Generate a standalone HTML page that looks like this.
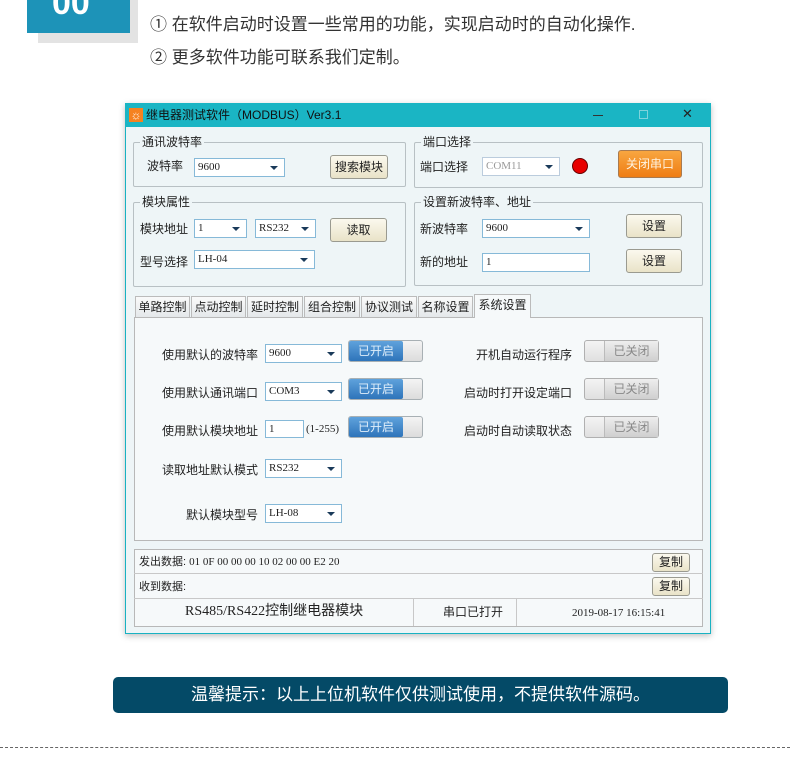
<!DOCTYPE html>
<html><head><meta charset="utf-8"><style>
*{margin:0;padding:0;box-sizing:border-box}
body{width:790px;height:760px;background:#fff;position:relative;overflow:hidden;font-family:"Liberation Sans","Noto Sans CJK SC",sans-serif;color:#222}
.a{position:absolute}
.t{position:absolute;font-size:12px;white-space:nowrap;line-height:14px}
.grp{position:absolute;border:1px solid #b8c0c4;border-radius:2px}
.gl{position:absolute;top:-9px;left:6px;background:#eef5f7;padding:0 2px;font-size:12px;line-height:16px}
.cb{position:absolute;background:#fff;border:1px solid #86b9d8;font-family:"Liberation Serif","Noto Sans CJK SC",serif;font-size:11px;line-height:17px;padding-left:3px}
.cb:after{content:"";position:absolute;right:6px;top:7px;border:4px solid transparent;border-top:4px solid #1a3a5a;border-bottom:0}
.cb.in:after{display:none}
.btn{position:absolute;background:linear-gradient(#fbf9ee,#e9e3c8);border:1px solid #9a9a90;border-radius:3px;font-size:12px;text-align:center}
.tab{position:absolute;top:296px;height:21px;border:1px solid #bbb;border-bottom:none;background:linear-gradient(#fafafa,#e4e8ea);font-size:12px;text-align:center;line-height:20px}
.on{position:absolute;width:75px;height:22px;border:1px solid #a8b0b4;border-radius:3px;background:linear-gradient(#f4f4f4,#dcdcdc)}
.on b{position:absolute;left:0;top:0;width:54px;height:20px;background:linear-gradient(#5fa2dc,#2e74ba);border-radius:2px;color:#dfeefa;font-weight:normal;font-size:12px;text-align:center;line-height:20px}
.off{position:absolute;width:75px;height:22px;border:1px solid #b0b0b0;border-radius:3px;background:linear-gradient(#f4f4f4,#e0e0e0)}
.off b{position:absolute;right:0;top:0;width:54px;height:20px;background:linear-gradient(#eee,#cfcfcf);border-left:1px solid #bbb;color:#888;font-weight:normal;font-size:12px;text-align:center;line-height:20px}
.lb{position:absolute;font-size:12px;text-align:right;white-space:nowrap}
</style></head><body>
<div class="a" style="left:38px;top:0;width:100px;height:43px;background:#e3e3e3"></div>
<div class="a" style="left:27px;top:0;width:103px;height:33px;background:#1d93b8"></div>
<div class="a" style="left:52px;top:-14px;color:#fff;font-size:34px;font-weight:bold;line-height:34px">00</div>
<div class="t" style="left:150px;top:14px;font-size:17px;line-height:22px;color:#333">① 在软件启动时设置一些常用的功能，实现启动时的自动化操作.</div>
<div class="t" style="left:150px;top:47px;font-size:17px;line-height:22px;color:#333">② 更多软件功能可联系我们定制。</div>

<div class="a" style="left:125px;top:103px;width:586px;height:531px;background:#eef5f7;border:1px solid #19b2c2;box-shadow:0 2px 6px rgba(0,0,0,.25)"></div>
<div class="a" style="left:125px;top:103px;width:586px;height:24px;background:#1ab5c4"></div>
<div class="a" style="left:129px;top:108px;width:14px;height:14px;background:#f58220;color:#fff;font-size:12px;line-height:14px;text-align:center">☼</div>
<div class="t" style="left:146px;top:108px;font-size:12px;color:#111">继电器测试软件（MODBUS）Ver3.1</div>
<div class="a" style="left:593px;top:115px;width:10px;height:1px;background:#333"></div>
<div class="a" style="left:639px;top:110px;width:9px;height:9px;border:1px solid #7fd3db"></div>
<div class="t" style="left:682px;top:107px;font-size:13px;color:#222">✕</div>

<div class="grp" style="left:133px;top:142px;width:273px;height:45px"><span class="gl">通讯波特率</span></div>
<div class="t" style="left:147px;top:159px">波特率</div>
<div class="cb" style="left:194px;top:158px;width:91px;height:19px">9600</div>
<div class="btn" style="left:330px;top:155px;width:58px;height:24px;line-height:22px">搜索模块</div>

<div class="grp" style="left:133px;top:202px;width:273px;height:85px"><span class="gl">模块属性</span></div>
<div class="t" style="left:140px;top:222px">模块地址</div>
<div class="cb" style="left:194px;top:219px;width:53px;height:19px">1</div>
<div class="cb" style="left:255px;top:219px;width:61px;height:19px">RS232</div>
<div class="btn" style="left:330px;top:218px;width:57px;height:24px;line-height:22px">读取</div>
<div class="t" style="left:140px;top:255px">型号选择</div>
<div class="cb" style="left:194px;top:250px;width:121px;height:19px">LH-04</div>

<div class="grp" style="left:414px;top:142px;width:289px;height:46px"><span class="gl">端口选择</span></div>
<div class="t" style="left:420px;top:160px">端口选择</div>
<div class="cb" style="left:482px;top:157px;width:78px;height:19px;color:#999;border-color:#bcd">COM11</div>
<div class="a" style="left:572px;top:158px;width:16px;height:16px;border-radius:50%;background:#e80000;border:1px solid #600"></div>
<div class="a" style="left:618px;top:150px;width:64px;height:28px;background:linear-gradient(#f8a640,#ef7d14);border:1px solid #a87a50;border-radius:3px;color:#fff3e0;font-size:12px;text-align:center;line-height:26px">关闭串口</div>

<div class="grp" style="left:414px;top:202px;width:289px;height:84px"><span class="gl">设置新波特率、地址</span></div>
<div class="t" style="left:420px;top:222px">新波特率</div>
<div class="cb" style="left:482px;top:219px;width:108px;height:19px">9600</div>
<div class="btn" style="left:626px;top:214px;width:56px;height:24px;line-height:22px">设置</div>
<div class="t" style="left:420px;top:255px">新的地址</div>
<div class="cb in" style="left:482px;top:253px;width:108px;height:19px">1</div>
<div class="btn" style="left:626px;top:249px;width:56px;height:24px;line-height:22px">设置</div>

<div class="a" style="left:134px;top:317px;width:569px;height:224px;border:1px solid #b8b8b8;background:#f6f9fa"></div>
<div class="tab" style="left:135px;width:55px">单路控制</div>
<div class="tab" style="left:191px;width:55px">点动控制</div>
<div class="tab" style="left:247px;width:56px">延时控制</div>
<div class="tab" style="left:304px;width:56px">组合控制</div>
<div class="tab" style="left:361px;width:56px">协议测试</div>
<div class="tab" style="left:418px;width:55px">名称设置</div>
<div class="tab" style="left:474px;top:294px;width:57px;height:24px;background:#f6f9fa">系统设置</div>

<div class="lb" style="right:532px;top:346px">使用默认的波特率</div>
<div class="cb" style="left:265px;top:344px;width:77px;height:19px">9600</div>
<div class="on" style="left:348px;top:340px"><b>已开启</b></div>
<div class="lb" style="right:532px;top:384px">使用默认通讯端口</div>
<div class="cb" style="left:265px;top:382px;width:77px;height:19px">COM3</div>
<div class="on" style="left:348px;top:378px"><b>已开启</b></div>
<div class="lb" style="right:532px;top:422px">使用默认模块地址</div>
<div class="cb in" style="left:265px;top:420px;width:39px;height:18px">1</div>
<div class="t" style="left:306px;top:422px;font-size:11px;font-family:'Liberation Serif',serif">(1-255)</div>
<div class="on" style="left:348px;top:416px"><b>已开启</b></div>
<div class="lb" style="right:532px;top:461px">读取地址默认模式</div>
<div class="cb" style="left:265px;top:459px;width:77px;height:19px">RS232</div>
<div class="lb" style="right:532px;top:506px">默认模块型号</div>
<div class="cb" style="left:265px;top:504px;width:77px;height:19px">LH-08</div>

<div class="lb" style="right:218px;top:346px">开机自动运行程序</div>
<div class="off" style="left:584px;top:340px"><b>已关闭</b></div>
<div class="lb" style="right:218px;top:384px">启动时打开设定端口</div>
<div class="off" style="left:584px;top:378px"><b>已关闭</b></div>
<div class="lb" style="right:218px;top:422px">启动时自动读取状态</div>
<div class="off" style="left:584px;top:416px"><b>已关闭</b></div>

<div class="a" style="left:134px;top:549px;width:569px;height:78px;border:1px solid #b8b8b8;background:#f6f9fa"></div>
<div class="a" style="left:134px;top:573px;width:569px;height:1px;background:#c8c8c8"></div>
<div class="a" style="left:134px;top:598px;width:569px;height:1px;background:#c8c8c8"></div>
<div class="a" style="left:413px;top:598px;width:1px;height:28px;background:#c8c8c8"></div>
<div class="a" style="left:516px;top:598px;width:1px;height:28px;background:#c8c8c8"></div>
<div class="t" style="left:139px;top:555px;font-size:11px">发出数据: <span style="font-family:'Liberation Serif',serif">01 0F 00 00 00 10 02 00 00 E2 20</span></div>
<div class="t" style="left:139px;top:580px;font-size:11px">收到数据:</div>
<div class="btn" style="left:652px;top:553px;width:38px;height:19px;line-height:17px">复制</div>
<div class="btn" style="left:652px;top:577px;width:38px;height:19px;line-height:17px">复制</div>
<div class="t" style="left:185px;top:604px;font-size:14px;line-height:16px;font-family:'Liberation Serif','Noto Sans CJK SC',serif">RS485/RS422控制继电器模块</div>
<div class="t" style="left:443px;top:605px">串口已打开</div>
<div class="t" style="left:572px;top:606px;font-size:11px;font-family:'Liberation Serif',serif">2019-08-17 16:15:41</div>

<div class="a" style="left:113px;top:677px;width:615px;height:36px;background:#044a67;border-radius:5px;color:#fff;font-size:17px;line-height:36px;text-align:center">温馨提示：以上上位机软件仅供测试使用，不提供软件源码。</div>
<div class="a" style="left:0;top:747px;width:790px;height:0;border-top:1px dashed #666"></div>
</body></html>
